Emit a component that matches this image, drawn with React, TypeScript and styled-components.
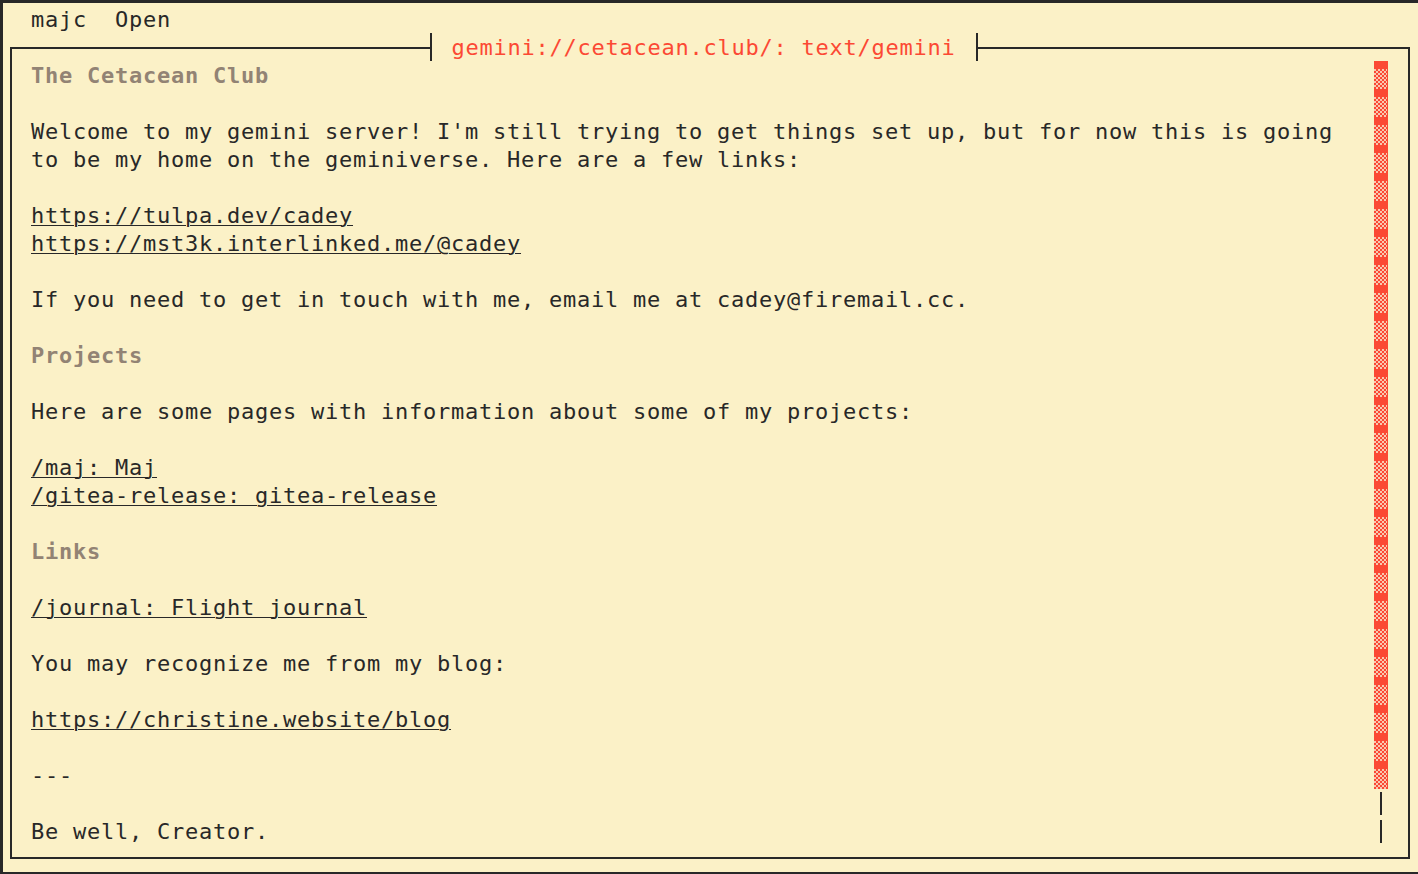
import styled, { createGlobalStyle } from "styled-components";

const ink = "#282828";
const paper = "#fbf1c7";
const red = "#fb4934";
const gray = "#928374";

const GlobalStyle = createGlobalStyle`
  html, body {
    margin: 0;
    padding: 0;
    background: ${paper};
  }
  body {
    font-family: "DejaVu Sans Mono", "Liberation Mono", monospace;
    font-size: 22px;
    letter-spacing: 0.755px;
    line-height: 28px;
    color: ${ink};
  }
`;

const Screen = styled.div`
  box-sizing: border-box;
  width: 1418px;
  height: 874px;
  background: ${paper};
  border-top: 3px solid ${ink};
  border-left: 3px solid ${ink};
  border-bottom: 2px solid ${ink};
  padding-top: 2px;
  overflow: hidden;
`;

const MenuBar = styled.div`
  box-sizing: border-box;
  display: flex;
  gap: 28px;
  height: 28px;
  padding: 1px 0 0 28px;
  white-space: pre;
`;

const MenuItem = styled.span`
  cursor: default;
`;

const Panel = styled.div`
  position: relative;
  box-sizing: border-box;
  width: 1400px;
  height: 812px;
  margin: 14px 0 0 7px;
  border: 2px solid ${ink};
  display: flex;
  padding: 12px 20px 12px 19px;
`;

const TitleTab = styled.div`
  position: absolute;
  top: -16px;
  left: 417.5px;
  box-sizing: border-box;
  height: 28px;
  padding: 1px 20px 0;
  background: ${paper};
  border-left: 2px solid ${ink};
  border-right: 2px solid ${ink};
  color: ${red};
  white-space: pre;
`;

const Body = styled.div`
  flex: 1;
  display: flex;
  flex-direction: column;
`;

const Line = styled.div<{ $kind: "h" | "p" | "link" | "blank" }>`
  box-sizing: border-box;
  height: 28px;
  padding-top: 1px;
  white-space: pre;
  font-weight: ${(p) => (p.$kind === "h" ? "bold" : "normal")};
  color: ${(p) => (p.$kind === "h" ? gray : ink)};
`;

const Link = styled.a`
  color: ${ink};
  text-decoration: underline;
  text-decoration-thickness: 1px;
  text-underline-offset: 2px;
`;

const ScrollTrack = styled.div`
  width: 14px;
  display: flex;
  flex-direction: column;
`;

const ThumbCell = styled.div`
  position: relative;
  height: 28px;
  background: ${red};
  &::after {
    content: "";
    position: absolute;
    left: 0;
    top: 8px;
    width: 13px;
    height: 20px;
    background: repeating-conic-gradient(${red} 0 25%, #f9c9b0 0 50%) 0 0 / 4px 4px;
  }
`;

const RailCell = styled.div`
  height: 28px;
  display: flex;
  justify-content: center;
  &::before {
    content: "";
    width: 2px;
    height: 23px;
    margin-top: 3px;
    background: ${ink};
  }
`;

type Row = { kind: "h" | "p" | "link" | "blank"; text?: string };

const rows: Row[] = [
  { kind: "h", text: "The Cetacean Club" },
  { kind: "blank" },
  {
    kind: "p",
    text: "Welcome to my gemini server! I'm still trying to get things set up, but for now this is going",
  },
  { kind: "p", text: "to be my home on the geminiverse. Here are a few links:" },
  { kind: "blank" },
  { kind: "link", text: "https://tulpa.dev/cadey" },
  { kind: "link", text: "https://mst3k.interlinked.me/@cadey" },
  { kind: "blank" },
  { kind: "p", text: "If you need to get in touch with me, email me at cadey@firemail.cc." },
  { kind: "blank" },
  { kind: "h", text: "Projects" },
  { kind: "blank" },
  { kind: "p", text: "Here are some pages with information about some of my projects:" },
  { kind: "blank" },
  { kind: "link", text: "/maj: Maj" },
  { kind: "link", text: "/gitea-release: gitea-release" },
  { kind: "blank" },
  { kind: "h", text: "Links" },
  { kind: "blank" },
  { kind: "link", text: "/journal: Flight journal" },
  { kind: "blank" },
  { kind: "p", text: "You may recognize me from my blog:" },
  { kind: "blank" },
  { kind: "link", text: "https://christine.website/blog" },
  { kind: "blank" },
  { kind: "p", text: "---" },
  { kind: "blank" },
  { kind: "p", text: "Be well, Creator." },
];

export default function App() {
  return (
    <>
      <GlobalStyle />
      <Screen>
        <MenuBar>
          <MenuItem>majc</MenuItem>
          <MenuItem>Open</MenuItem>
        </MenuBar>
        <Panel>
          <TitleTab>gemini://cetacean.club/: text/gemini</TitleTab>
          <Body>
            {rows.map((row, i) => (
              <Line key={i} $kind={row.kind}>
                {row.kind === "link" ? <Link>{row.text}</Link> : row.text}
              </Line>
            ))}
          </Body>
          <ScrollTrack>
            {Array.from({ length: 26 }).map((_, i) => (
              <ThumbCell key={i} />
            ))}
            <RailCell />
            <RailCell />
          </ScrollTrack>
        </Panel>
      </Screen>
    </>
  );
}
